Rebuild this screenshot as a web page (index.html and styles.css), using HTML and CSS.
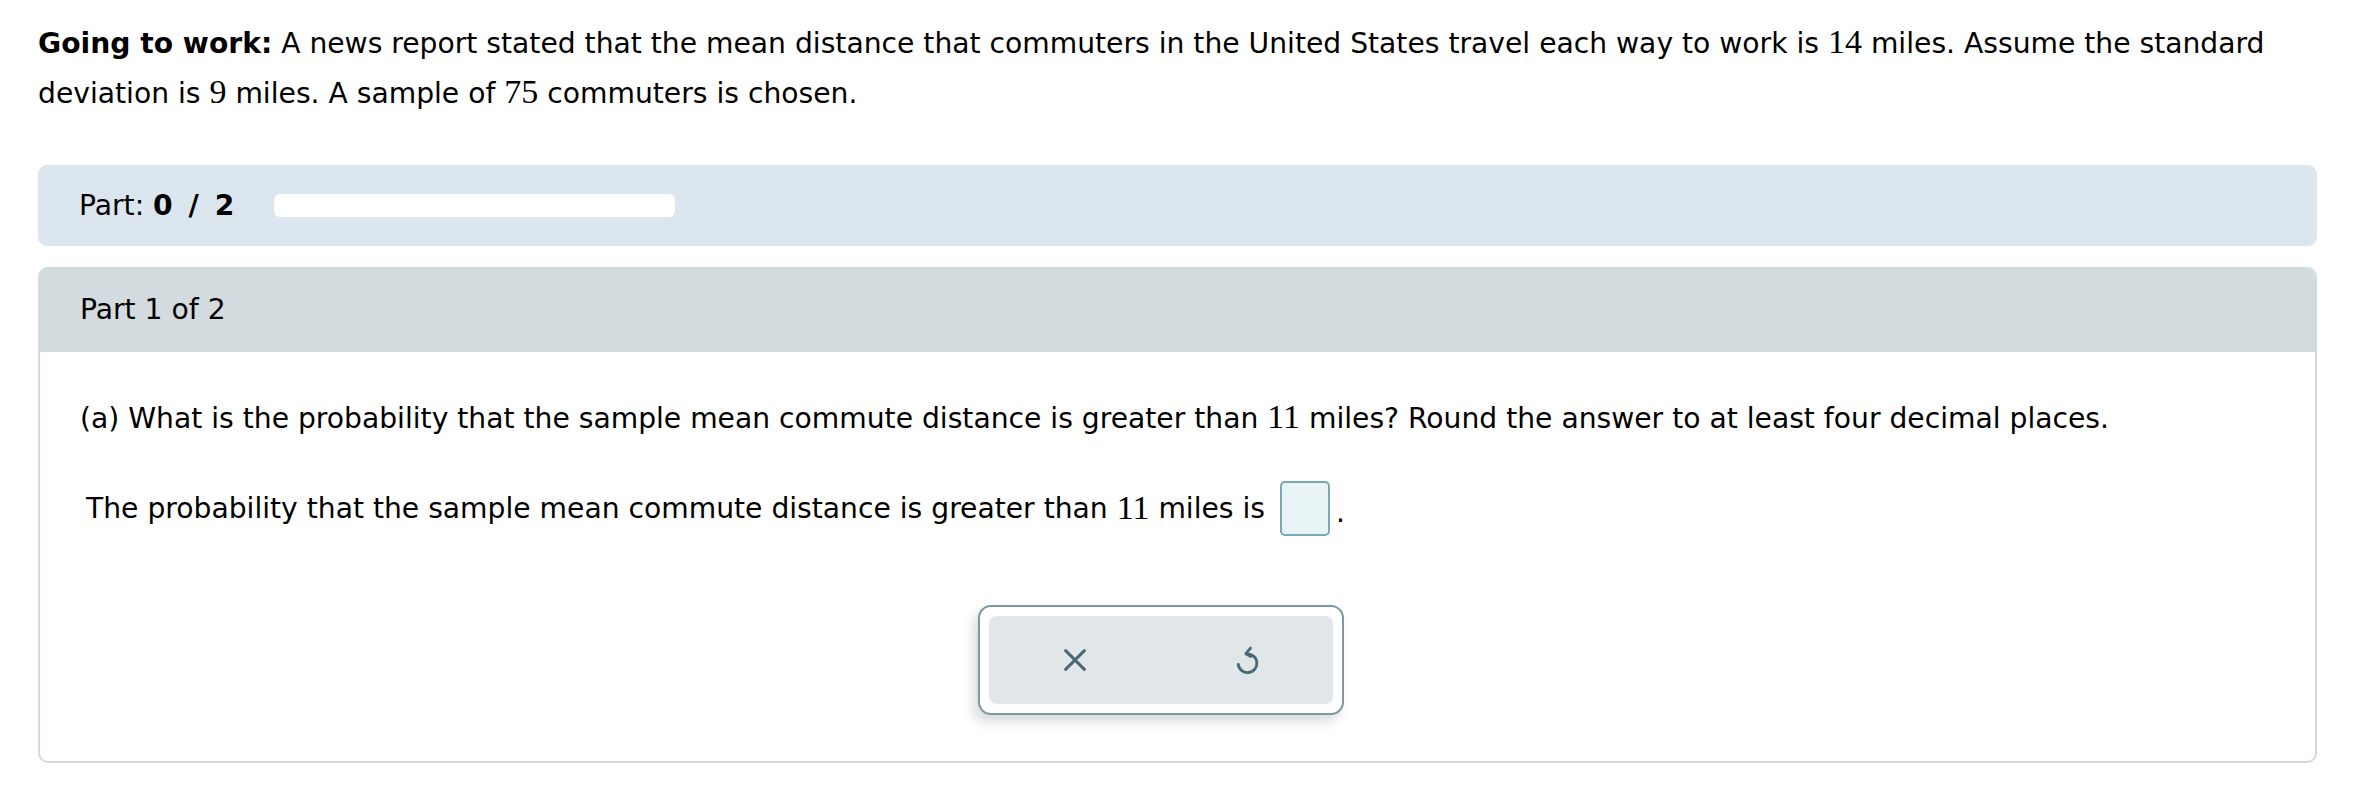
FILE: index.html
```html
<!DOCTYPE html>
<html>
<head>
<meta charset="utf-8">
<link rel="stylesheet" href="styles.css">
</head>
<body>
<div class="page">
  <p class="intro"><b>Going to work:</b> A news report stated that the mean distance that commuters in the United States travel each way to work is <span class="m">14</span> miles. Assume the standard<br>deviation is <span class="m">9</span> miles. A sample of <span class="m">75</span> commuters is chosen.</p>

  <div class="partbar">
    <span class="partlabel">Part: <b>0 / 2</b></span>
    <span class="progress"></span>
  </div>

  <div class="card">
    <div class="card-head">Part 1 of 2</div>
    <div class="card-body">
      <p class="question">(a) What is the probability that the sample mean commute distance is greater than <span class="m">11</span> miles? Round the answer to at least four decimal places.</p>
      <div class="answer">The probability that the sample mean commute distance is greater than <span class="m">11</span> miles is <span class="box"></span><span class="dot">.</span></div>
      <div class="tools">
        <div class="tools-inner">
          <button class="tbtn" aria-label="Clear">
            <svg width="30" height="30" viewBox="0 0 24 24" fill="none" stroke="#476874" stroke-width="2.4" stroke-linecap="round"><path d="M4.5 4.5 L19.5 19.5 M19.5 4.5 L4.5 19.5"/></svg>
          </button>
          <button class="tbtn" aria-label="Undo">
            <svg width="33" height="33" viewBox="0 0 24 24" fill="none" stroke="#476874" stroke-width="2.1" stroke-linecap="round" stroke-linejoin="round"><path d="M11.5 7.2 A6.8 6.8 0 1 1 5.3 14.8"/><path d="M14.2 3 L10.8 7 L14.4 9"/></svg>
          </button>
        </div>
      </div>
    </div>
  </div>
</div>
</body>
</html>
```

FILE: styles.css
```css
html, body {
  margin: 0;
  padding: 0;
  background: #ffffff;
}
body {
  font-family: "DejaVu Sans", Verdana, sans-serif;
  font-size: 28.2px;
  color: #000;
}
.page {
  padding: 18px 53px 0 38px;
}
.intro {
  margin: 0;
  line-height: 48px;
}
.m {
  font-family: "Liberation Serif", "Times New Roman", serif;
  font-size: 34px;
}
.partbar {
  margin-top: 47px;
  height: 81px;
  background: #dce6ef;
  border-radius: 9px;
  display: flex;
  align-items: center;
  padding-left: 41px;
  gap: 40px;
}
.partlabel b {
  font-weight: bold;
  word-spacing: 6px;
}
.progress {
  width: 401px;
  height: 23px;
  background: #fff;
  border-radius: 6px;
}
.card {
  margin-top: 21px;
  border: 2px solid #d3dadd;
  border-radius: 10px;
  overflow: hidden;
}
.card-head {
  background: #d3dbde;
  height: 85px;
  display: flex;
  align-items: center;
  margin: -2px -2px 0 -2px;
  padding-left: 42px;
}
.card-body {
  padding: 45px 40px 46px 40px;
}
.question {
  margin: 0;
  line-height: 40px;
}
.answer {
  margin-top: 42px;
  padding-left: 6px;
  display: flex;
  align-items: center;
  height: 54px;
  white-space: pre;
}
.box {
  display: inline-block;
  width: 46px;
  height: 51px;
  margin-left: 6px;
  background: #e8f3f6;
  border: 2px solid #79a7b4;
  border-radius: 5px;
}
.dot {
  margin-left: 6px;
  align-self: flex-end;
  line-height: 44px;
}
.tools {
  margin-top: 70px;
  margin-left: 898px;
  width: 344px;
  padding: 9px;
  border: 2px solid #7f979f;
  border-radius: 13px;
  background: #fff;
  box-shadow: -5px 7px 12px rgba(40, 60, 70, 0.18);
}
.tools-inner {
  display: flex;
  background: #e1e6e9;
  border-radius: 8px;
  height: 88px;
}
.tbtn {
  flex: 1;
  border: 0;
  background: transparent;
  display: flex;
  align-items: center;
  justify-content: center;
  padding: 0;
  cursor: pointer;
}
```
